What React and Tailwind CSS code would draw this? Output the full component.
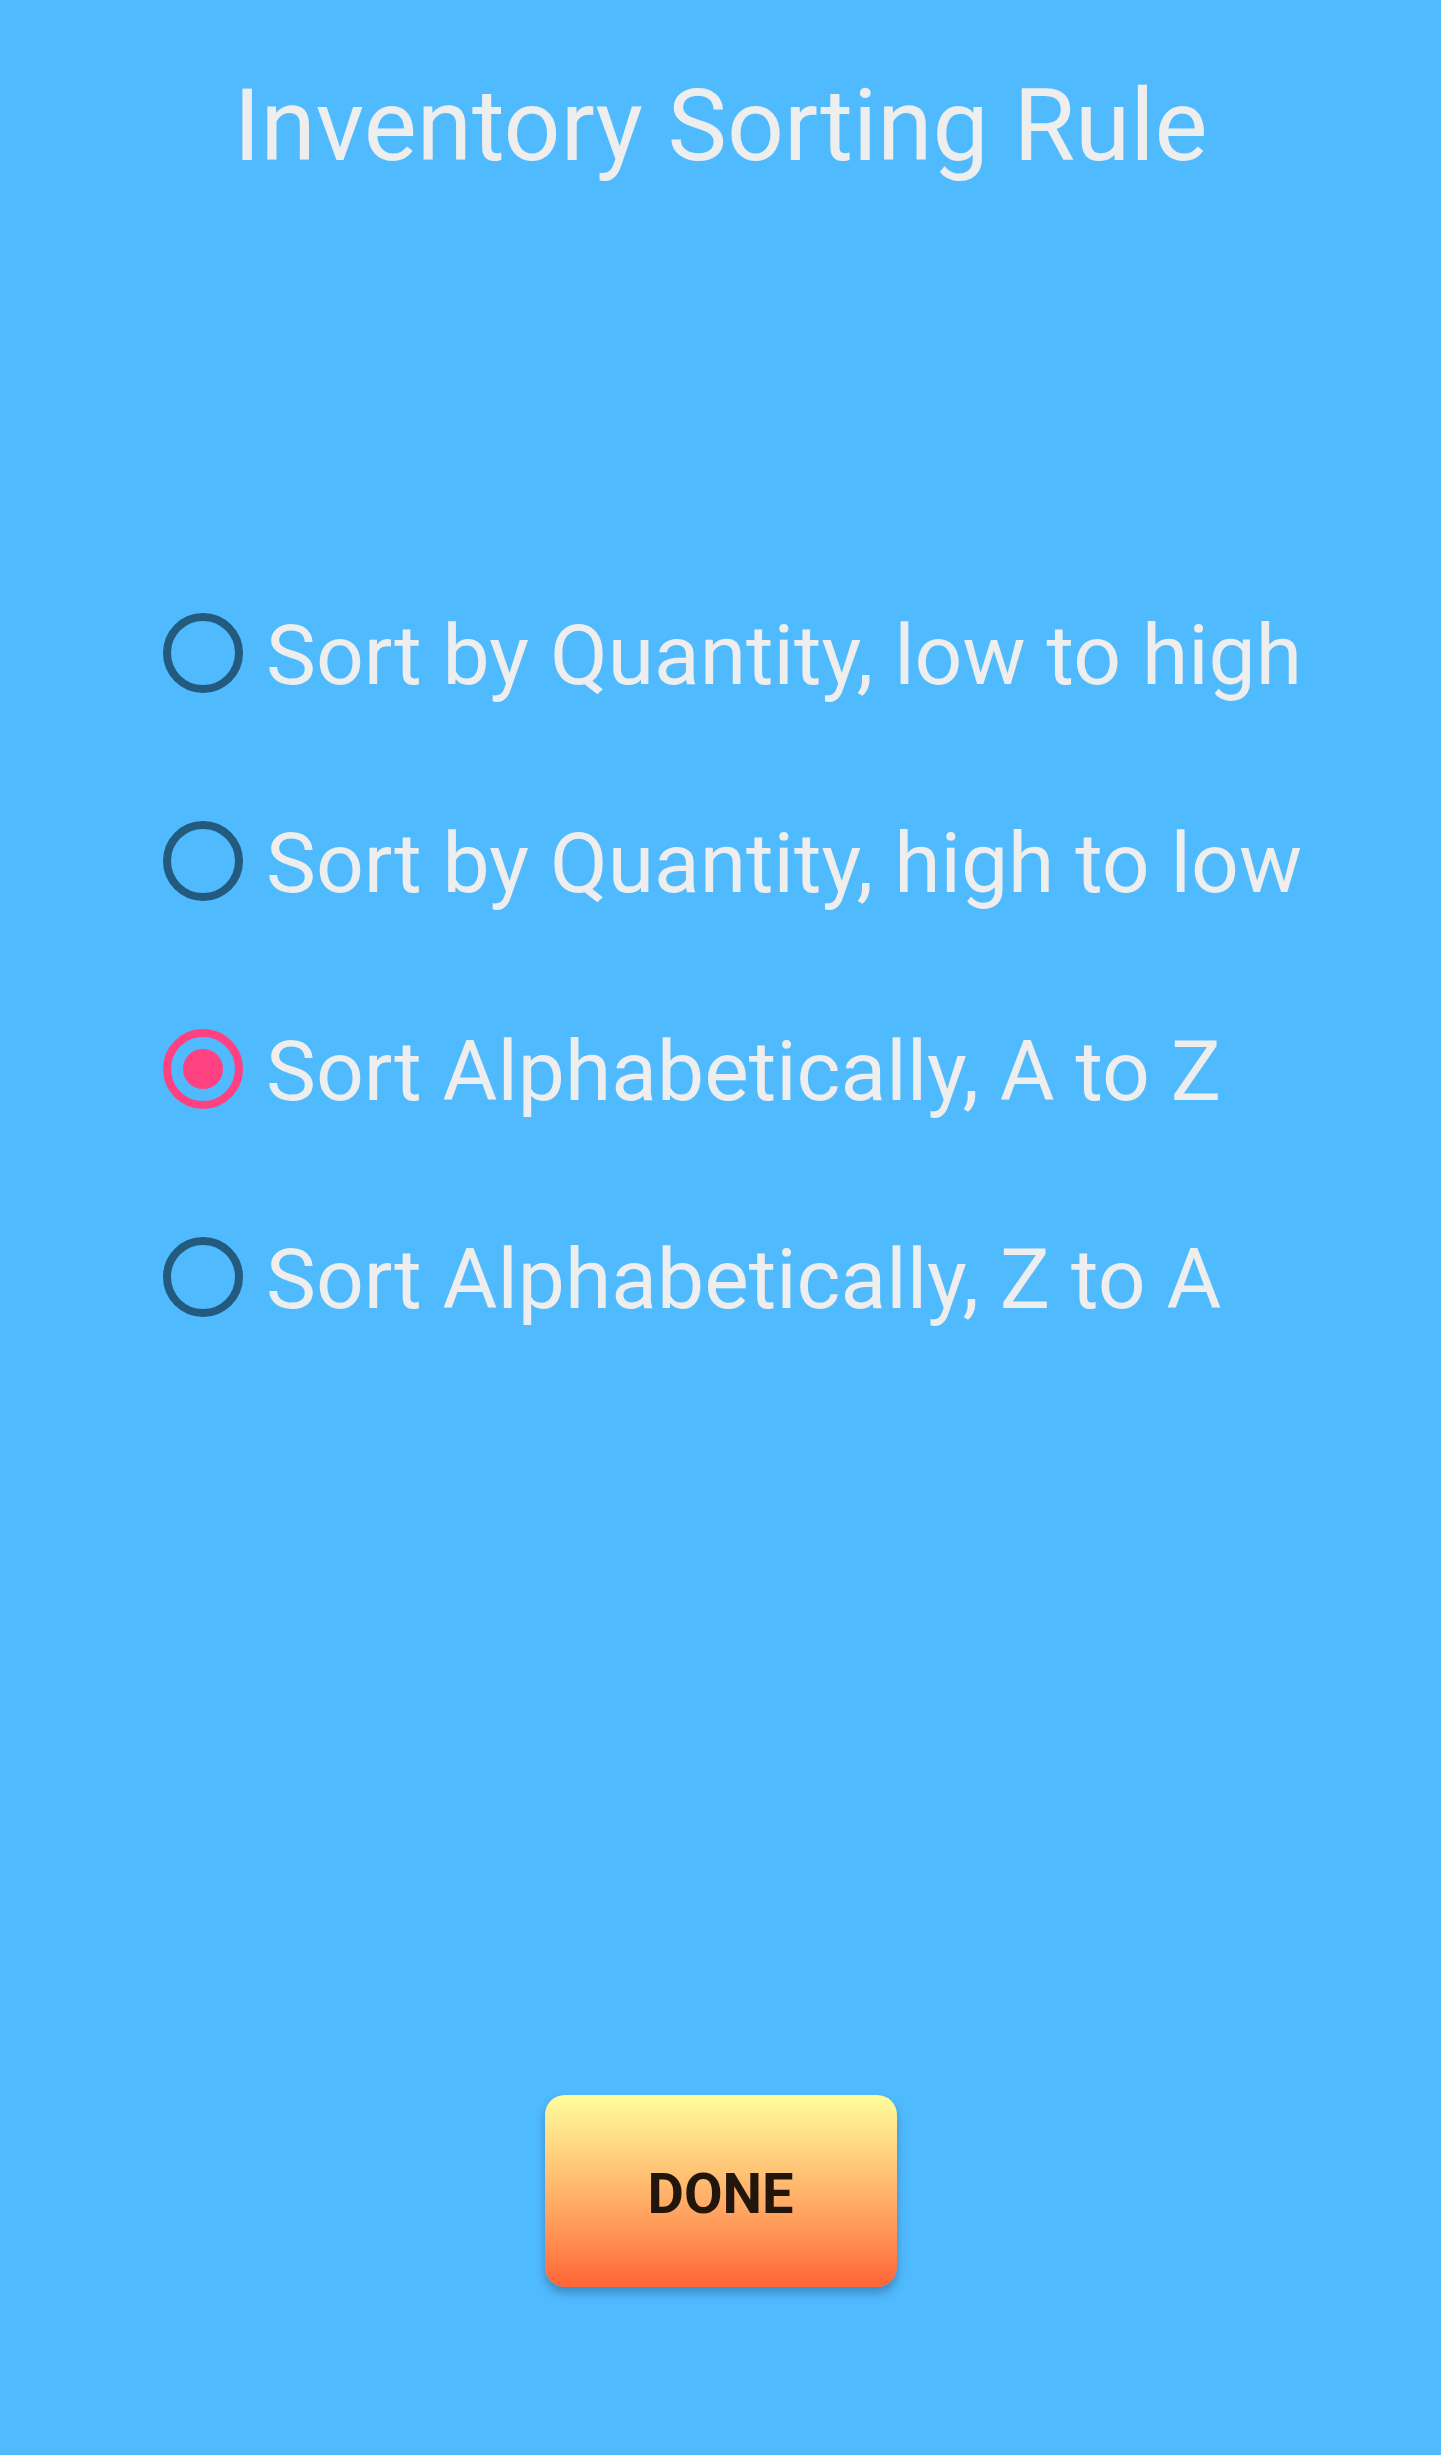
import React, { useState } from 'react';

const opciones = [
  'Sort by Quantity, low to high',
  'Sort by Quantity, high to low',
  'Sort Alphabetically, A to Z',
  'Sort Alphabetically, Z to A',
];

function Radio({ activo }) {
  if (activo) {
    return (
      <div className="w-[80px] h-[80px] shrink-0 rounded-full border-[8px] border-[#ff4081] flex items-center justify-center">
        <div className="w-[40px] h-[40px] rounded-full bg-[#ff4081]" />
      </div>
    );
  }
  return <div className="w-[80px] h-[80px] shrink-0 rounded-full border-[8px] border-[#245a7e]" />;
}

export default function App() {
  const [sel, setSel] = useState(2);

  return (
    <div
      className="w-full min-h-[2455px] bg-[#50baff] flex flex-col items-center"
      style={{ fontFamily: 'Roboto, "Noto Sans", sans-serif' }}
    >
      <h1 className="pt-[76px] text-[100px] leading-[100px] font-normal text-[#eeeeee]">Inventory Sorting Rule</h1>

      <div className="w-full mt-[437px] pl-[163px] flex flex-col gap-[128px]">
        {opciones.map((texto, i) => (
          <button
            key={texto}
            onClick={() => setSel(i)}
            className="h-[80px] flex items-center gap-[23px] text-left"
          >
            <Radio activo={sel === i} />
            <span className="pt-[6px] text-[84px] leading-[84px] text-[#eeeeee] whitespace-nowrap">{texto}</span>
          </button>
        ))}
      </div>

      <button className="mt-[778px] w-[352px] h-[192px] rounded-[20px] bg-gradient-to-b from-[#fffd9e] to-[#ff6437] shadow-[0_6px_10px_rgba(0,0,0,0.25)] flex items-center justify-center">
        <span className="pt-[6px] text-[56px] leading-[56px] font-bold text-[#22160c]">DONE</span>
      </button>
    </div>
  );
}
